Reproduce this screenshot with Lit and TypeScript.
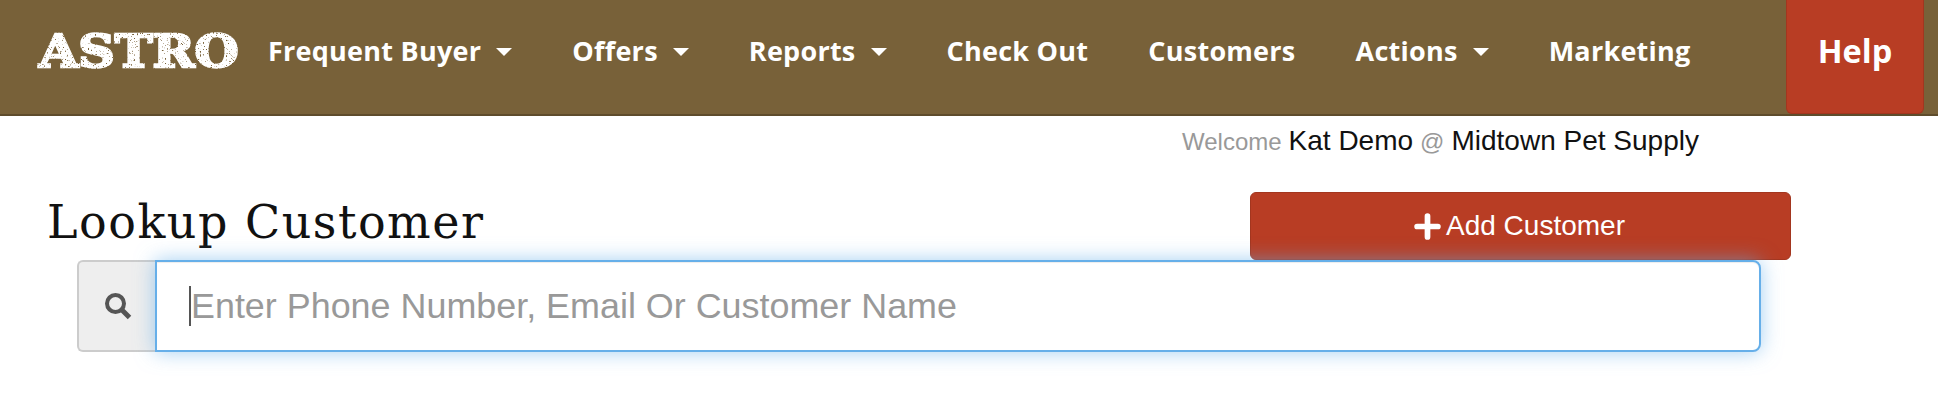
import { LitElement, html, css } from "lit";
import { customElement } from "lit/decorators.js";

const NAV: { label: string; caret?: boolean }[] = [
  { label: "Frequent Buyer", caret: true },
  { label: "Offers", caret: true },
  { label: "Reports", caret: true },
  { label: "Check Out" },
  { label: "Customers" },
  { label: "Actions", caret: true },
  { label: "Marketing" },
];

@customElement("app-root")
export class AppRoot extends LitElement {
  static styles = css`
    :host { display: block; width: 1938px; height: 414px; overflow: hidden; background: #fff; font-family: "Liberation Sans", Arial, sans-serif; color: #111; }
    * { box-sizing: border-box; }
    .defs { display: block; width: 0; height: 0; }
    .bar { display: flex; align-items: flex-start; height: 116px; background: #786139; border-bottom: 2px solid #5e4c2c; padding-left: 39px; }
    .logo { width: 229px; height: 114px; display: flex; align-items: center; padding-bottom: 12px; }
    .logo span { display: block; font-family: "DejaVu Serif", serif; font-weight: 900; font-size: 44px; color: #fff; letter-spacing: 0; -webkit-text-stroke: 2.4px #fff; white-space: nowrap; transform: scaleX(1.15); transform-origin: left center; filter: url(#speckle); }
    nav { display: flex; gap: 60px; height: 100px; align-items: center; font-family: "Open Sans", sans-serif; font-weight: 700; font-size: 27px; letter-spacing: 0.25px; color: #fff; white-space: nowrap; }
    .item { display: flex; align-items: center; gap: 15px; }
    .caret { width: 0; height: 0; border-left: 8px solid transparent; border-right: 8px solid transparent; border-top: 8px solid #fff; margin-top: 3px; }
    .help { margin-left: auto; margin-right: 14px; width: 138px; height: 114px; background: #b83d24; border: 1px solid #a3361f; border-top: 0; border-radius: 0 0 6px 6px; color: #fff; font-family: "Open Sans", sans-serif; font-weight: 700; font-size: 32.5px; display: flex; align-items: center; justify-content: center; padding-bottom: 12px; }
    .welcome { display: flex; align-items: baseline; gap: 7px; padding: 9px 0 0 1182px; height: 76px; font-size: 28px; color: #111; white-space: nowrap; }
    .muted { color: #999; font-size: 24px; }
    .title-row { display: flex; align-items: flex-start; height: 68px; padding-left: 47px; }
    h1 { margin: 0; font-family: "DejaVu Serif", serif; font-weight: 400; font-size: 46px; letter-spacing: 1.5px; line-height: 60px; width: 1203px; color: #111; white-space: nowrap; }
    .add { width: 541px; height: 68px; background: #b83d24; border: 1px solid #a3361f; border-radius: 6px; color: #fff; font: 28px "Liberation Sans", Arial, sans-serif; display: flex; align-items: center; justify-content: center; gap: 5px; padding: 0 2px 0 0; }
    .add svg { width: 27px; height: 27px; }
    .group { display: flex; margin-left: 77px; width: 1684px; height: 92px; }
    .addon { width: 78px; background: #eee; border: 2px solid #ccc; border-right: 0; border-radius: 6px 0 0 6px; display: flex; align-items: center; justify-content: center; padding-left: 2px; }
    .addon svg { width: 30px; height: 30px; }
    .field { position: relative; flex: 1; border: 2px solid #66afe9; border-radius: 0 8px 8px 0; background: #fff; box-shadow: 0 0 20px rgba(102,175,233,.6), inset 0 1px 1px rgba(0,0,0,.075); }
    input { display: block; width: 100%; height: 100%; border: 0; outline: 0; background: transparent; padding: 0 0 0 34px; font: 35.9px "Liberation Sans", Arial, sans-serif; color: #555; }
    input::placeholder { color: #999; opacity: 1; }
    .cursor { position: absolute; left: 32px; top: 24px; width: 2px; height: 40px; background: #555; }
  `;

  render() {
    return html`
      <svg class="defs" aria-hidden="true">
        <filter id="speckle" x="0" y="0" width="100%" height="100%">
          <feTurbulence type="fractalNoise" baseFrequency="0.7" numOctaves="2" seed="4" result="n" />
          <feColorMatrix in="n" type="matrix" values="0 0 0 0 0  0 0 0 0 0  0 0 0 0 0  0 0 0 -7 5.4" result="mask" />
          <feComposite in="SourceGraphic" in2="mask" operator="in" />
        </filter>
      </svg>
      <header class="bar">
        <div class="logo"><span>ASTRO</span></div>
        <nav>
          ${NAV.map(
            (n) => html`<div class="item">${n.label}${n.caret ? html`<span class="caret"></span>` : ""}</div>`
          )}
        </nav>
        <div class="help">Help</div>
      </header>
      <div class="welcome"><span class="muted">Welcome</span><span>Kat Demo</span><span class="muted">@</span><span>Midtown Pet Supply</span></div>
      <div class="title-row">
        <h1>Lookup Customer</h1>
        <button class="add">
          <svg viewBox="0 0 26 26"><path d="M13 3v20M3 13h20" stroke="#fff" stroke-width="5.5" stroke-linecap="round" fill="none"/></svg>
          Add Customer
        </button>
      </div>
      <div class="group">
        <div class="addon">
          <svg viewBox="0 0 30 30"><circle cx="12.5" cy="12.5" r="8.5" fill="none" stroke="#555" stroke-width="4"/><path d="M19 19l7.5 7.5" stroke="#555" stroke-width="5" fill="none"/></svg>
        </div>
        <div class="field">
          <input type="text" placeholder="Enter Phone Number, Email Or Customer Name" />
          <span class="cursor"></span>
        </div>
      </div>
    `;
  }
}
